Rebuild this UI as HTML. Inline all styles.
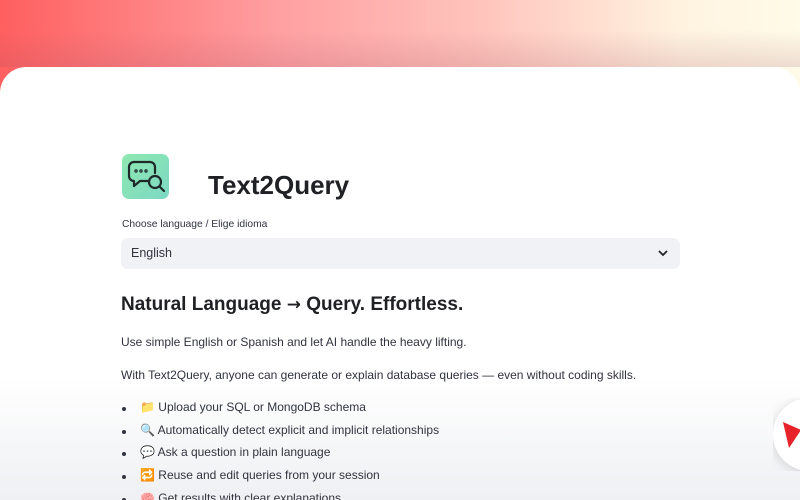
<!DOCTYPE html>
<html><head><meta charset="utf-8"><style>
*{margin:0;padding:0;box-sizing:border-box}
html,body{width:800px;height:500px;overflow:hidden}
body{font-family:"Liberation Sans","Noto Sans CJK JP",sans-serif;background:linear-gradient(90deg,#ff5f5f 0%,#ffa0a2 35%,#ffc4bc 60%,#fff3e0 85%,#fffbe8 100%);position:relative;color:#31333f}
.shade{position:absolute;left:0;top:30px;width:800px;height:37px;background:linear-gradient(180deg,rgba(160,80,100,0),rgba(160,80,100,0.18))}
.card{position:absolute;left:0;top:67px;width:800px;height:433px;background:linear-gradient(180deg,#fff 0,#fff 310px,#eff0f3 433px);border-radius:26px 26px 0 0}
.logo{position:absolute;left:122px;top:154px;width:47px;height:45px;border-radius:7px;background:linear-gradient(135deg,#8ee8b0,#7dd8c4)}
h1{position:absolute;left:208px;top:170px;font-size:26px;font-weight:bold;color:#202124}
.lbl{position:absolute;left:122px;top:219px;font-size:10.3px}
.sel{position:absolute;left:121px;top:238px;width:559px;height:31px;background:#f1f2f6;border-radius:7px;font-size:12.5px;padding:8px 10px}
.sel svg{position:absolute;right:12px;top:12px}
h2{position:absolute;left:121px;top:294px;font-size:19px;font-weight:bold;color:#202124}
.p{position:absolute;left:121px;font-size:12px}
ul{position:absolute;left:121px;top:400px;list-style:none;font-size:12px}
li{height:22.7px;position:relative;padding-left:19px;white-space:nowrap}
li:before{content:"";position:absolute;left:1px;top:7px;width:4px;height:4px;border-radius:50%;background:#31333f}
.circ{position:absolute;left:773px;top:398px;width:27px;height:73px;overflow:hidden}
.circ div{width:80px;height:73px;border-radius:40px;background:#fff;box-shadow:0 2px 12px rgba(0,0,0,.15);position:relative}
</style></head><body>
<div class="shade"></div>
<div class="card"></div>
<div class="logo"><svg width="47" height="45" viewBox="0 0 47 45" fill="none" stroke="#1e2a2a" stroke-width="2.2" stroke-linecap="round" stroke-linejoin="round"><path d="M12 8h16a5 5 0 0 1 5 5v6"/><path d="M26 27h-8l-6 5v-5a5 5 0 0 1-5-5V13a5 5 0 0 1 5-5"/><circle cx="14" cy="17" r=".6"/><circle cx="19" cy="17" r=".6"/><circle cx="24" cy="17" r=".6"/><circle cx="33" cy="28" r="6"/><path d="M37.5 32.5l4.5 4.5"/></svg></div>
<h1>Text2Query</h1>
<div class="lbl">Choose language / Elige idioma</div>
<div class="sel">English<svg width="10" height="7" viewBox="0 0 10 7"><path d="M1 1l4 4 4-4" fill="none" stroke="#222" stroke-width="1.8"/></svg></div>
<h2>Natural Language <span style="font-family:'DejaVu Sans';font-size:17px">→</span> Query. Effortless.</h2>
<div class="p" style="top:335px">Use simple English or Spanish and let AI handle the heavy lifting.</div>
<div class="p" style="top:368px">With Text2Query, anyone can generate or explain database queries — even without coding skills.</div>
<ul>
<li>📁 Upload your SQL or MongoDB schema</li>
<li>🔍 Automatically detect explicit and implicit relationships</li>
<li>💬 Ask a question in plain language</li>
<li>🔁 Reuse and edit queries from your session</li>
<li>🧠 Get results with clear explanations</li>
</ul>
<div class="circ"><div><svg width="30" height="30" viewBox="0 0 30 30" style="position:absolute;left:10px;top:24px"><path d="M0 0l18 8-12 18z" fill="#e8222a"/></svg></div></div>
</body></html>
